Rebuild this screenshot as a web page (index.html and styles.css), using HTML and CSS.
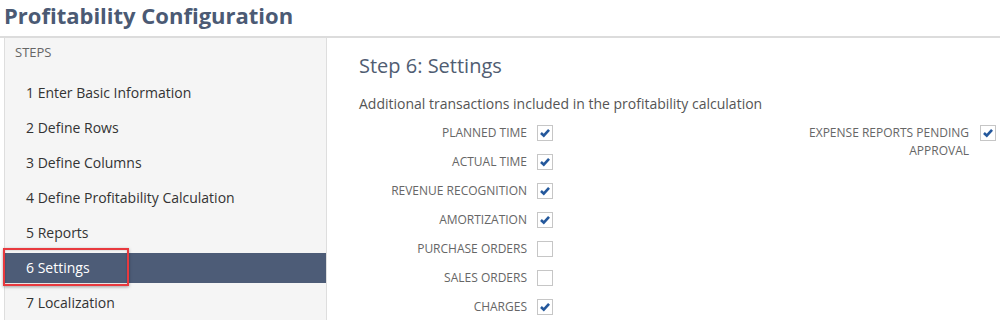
FILE: index.html
```html
<!DOCTYPE html>
<html>
<head>
<meta charset="utf-8">
<link rel="stylesheet" href="styles.css">
</head>
<body>
<header class="page-header">
  <h1 class="page-title">Profitability Configuration</h1>
</header>
<div class="layout">
  <aside class="steps">
    <div class="steps-title">STEPS</div>
    <ul class="step-list">
      <li class="step">1 Enter Basic Information</li>
      <li class="step">2 Define Rows</li>
      <li class="step">3 Define Columns</li>
      <li class="step">4 Define Profitability Calculation</li>
      <li class="step">5 Reports</li>
      <li class="step step-active">6 Settings<span class="highlight"></span></li>
      <li class="step">7 Localization</li>
    </ul>
  </aside>
  <main class="content">
    <h2 class="content-title">Step 6: Settings</h2>
    <p class="content-desc">Additional transactions included in the profitability calculation</p>
    <div class="form-grid">
      <div class="form-col">
        <div class="field"><span class="field-label">PLANNED TIME</span><span class="cb checked"><svg viewBox="0 0 16 16"><path d="M3.4 8 L6.6 11 L12.6 4.4"/></svg></span></div>
        <div class="field"><span class="field-label">ACTUAL TIME</span><span class="cb checked"><svg viewBox="0 0 16 16"><path d="M3.4 8 L6.6 11 L12.6 4.4"/></svg></span></div>
        <div class="field"><span class="field-label">REVENUE RECOGNITION</span><span class="cb checked"><svg viewBox="0 0 16 16"><path d="M3.4 8 L6.6 11 L12.6 4.4"/></svg></span></div>
        <div class="field"><span class="field-label">AMORTIZATION</span><span class="cb checked"><svg viewBox="0 0 16 16"><path d="M3.4 8 L6.6 11 L12.6 4.4"/></svg></span></div>
        <div class="field"><span class="field-label">PURCHASE ORDERS</span><span class="cb"></span></div>
        <div class="field"><span class="field-label">SALES ORDERS</span><span class="cb"></span></div>
        <div class="field"><span class="field-label">CHARGES</span><span class="cb checked"><svg viewBox="0 0 16 16"><path d="M3.4 8 L6.6 11 L12.6 4.4"/></svg></span></div>
      </div>
      <div class="form-col">
        <div class="field field-right"><span class="field-label">EXPENSE REPORTS PENDING APPROVAL</span><span class="cb checked"><svg viewBox="0 0 16 16"><path d="M3.4 8 L6.6 11 L12.6 4.4"/></svg></span></div>
      </div>
    </div>
  </main>
</div>
</body>
</html>
```

FILE: styles.css
```css
* { box-sizing: border-box; }
html, body { margin: 0; padding: 0; background: #fff; }
body {
  font-family: "Open Sans", "Liberation Sans", sans-serif;
  color: #333;
  overflow: hidden;
}
.page-header {
  padding: 0 0 6px 4px;
  border-bottom: 2px solid #dcdcdc;
}
.page-title {
  margin: 0;
  font-size: 22px;
  line-height: 30px;
  font-weight: 700;
  color: #4b5a74;
}
.layout {
  display: flex;
  min-height: 290px;
  padding-left: 4px;
}
.steps {
  width: 323px;
  flex: none;
  background: #f5f5f5;
  border-left: 1px solid #dedede;
  border-right: 1px solid #dedede;
  padding-top: 6px;
}
.steps-title {
  padding: 0 10px;
  font-size: 13px;
  line-height: 16px;
  color: #666;
}
.step-list {
  list-style: none;
  margin: 18px 0 0 0;
  padding: 0;
  display: flex;
  flex-direction: column;
  gap: 5px;
}
.step {
  position: relative;
  height: 30px;
  line-height: 30px;
  padding-left: 21px;
  font-size: 14px;
  color: #333;
}
.step-active {
  background: #4d5c77;
  color: #fff;
}
.highlight {
  position: absolute;
  left: -2px;
  top: -5px;
  width: 126px;
  height: 38px;
  border: 2px solid #e8393e;
  box-shadow: 0 1px 3px rgba(0,0,0,0.35), inset 0 0 2px rgba(0,0,0,0.25);
}
.content {
  flex: 1;
  padding: 14px 0 0 32px;
}
.content-title {
  margin: 0;
  font-size: 20px;
  line-height: 28px;
  font-weight: 400;
  color: #505d72;
}
.content-desc {
  margin: 14px 0 4px 0;
  font-size: 14px;
  line-height: 20px;
  color: #555;
}
.form-grid {
  display: grid;
  grid-template-columns: 442px auto;
}
.field {
  display: flex;
  align-items: flex-start;
  min-height: 29px;
}
.field-label {
  width: 168px;
  text-align: right;
  font-size: 12px;
  line-height: 18px;
  padding-top: 6px;
  color: #666;
}
.cb {
  width: 16px;
  height: 16px;
  margin-top: 6.5px;
  margin-left: 10px;
  border: 1px solid #c6c6c6;
  background: #fff;
  display: flex;
}
.field-right .cb { margin-left: 11px; }
.cb svg {
  width: 14px;
  height: 14px;
}
.cb svg path {
  fill: none;
  stroke: #24589c;
  stroke-width: 3;
  stroke-linecap: butt;
  stroke-linejoin: miter;
}
```
